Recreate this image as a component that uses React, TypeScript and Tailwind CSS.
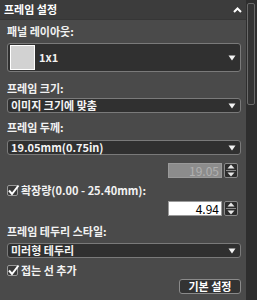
import React, { useState } from 'react';

const font = { fontFamily: '"Noto Sans CJK KR", "Noto Sans", "Liberation Sans", sans-serif' };

function Arrow() {
  return (
    <svg width="8" height="6" viewBox="0 0 8 6" className="shrink-0">
      <path d="M0.5 0.5 H7.5 L4 5.5 Z" fill="#f2f2f2" />
    </svg>
  );
}

function Select({ label, className = '' }: { label: string; className?: string }) {
  return (
    <div
      className={`flex items-center justify-between h-[15px] pl-[3px] pr-[4px] bg-[#303030] border border-[#7a7a7a] rounded-[3px] text-[11px] font-bold text-[#f4f4f4] leading-none ${className}`}
    >
      <span>{label}</span>
      <Arrow />
    </div>
  );
}

function Spinner() {
  return (
    <div className="flex flex-col w-[14px] h-[15px] bg-[#2c2c2c] border border-[#8a8a8a] rounded-[2px] items-center justify-center gap-[1px]">
      <svg width="8" height="5" viewBox="0 0 8 5">
        <path d="M0.5 4.5 H7.5 L4 0.5 Z" fill="#e6e6e6" />
      </svg>
      <div className="w-[10px] h-px bg-[#8a8a8a]" />
      <svg width="8" height="5" viewBox="0 0 8 5">
        <path d="M0.5 0.5 H7.5 L4 4.5 Z" fill="#e6e6e6" />
      </svg>
    </div>
  );
}

function Check({ on }: { on: boolean }) {
  return (
    <div className="w-[11px] h-[11px] bg-[#3a3a3a] border border-[#9a9a9a] rounded-[2px] relative shrink-0">
      {on && (
        <svg width="13" height="12" viewBox="0 0 13 12" className="absolute -left-[1px] -top-[2px]">
          <path d="M2 6.5 L5 10 L11.5 1.5" stroke="#ffffff" strokeWidth="2" fill="none" />
        </svg>
      )}
    </div>
  );
}

export default function App() {
  const [expand, setExpand] = useState(true);
  const [fold, setFold] = useState(true);

  return (
    <div className="w-[257px] h-[300px] flex bg-[#2e2e2e] overflow-hidden select-none" style={font}>
      <div className="w-[246px] flex flex-col bg-[#4a4a4a]">
        <div className="h-[20px] flex items-center justify-between pl-[4px] pr-[4px] bg-[#3c3c3c] border-b border-[#363636]">
          <span className="text-[11px] font-bold text-white leading-none">프레임 설정</span>
          <svg width="9" height="6" viewBox="0 0 9 6">
            <path d="M1 5 L4.5 1.5 L8 5" stroke="#ffffff" strokeWidth="2" fill="none" />
          </svg>
        </div>

        <div className="flex flex-col pl-[7px] pr-[5px] text-[11px] font-bold text-[#f2f2f2] leading-none">
          <div className="mt-[4px] h-[14px] flex items-center">패널 레이아웃:</div>

          <div className="mt-[5px] h-[29px] flex items-center pl-[2px] pr-[4px] bg-[#303030] border border-[#7a7a7a] rounded-[3px]">
            <div className="w-[25px] h-[25px] bg-[#d2d2d2] border border-white" />
            <span className="ml-[4px] flex-1">1x1</span>
            <Arrow />
          </div>

          <div className="mt-[9px] h-[14px] flex items-center">프레임 크기:</div>
          <Select label="이미지 크기에 맞춤" className="mt-[3px]" />

          <div className="mt-[7px] h-[14px] flex items-center">프레임 두께:</div>
          <Select label="19.05mm(0.75in)" className="mt-[6px]" />

          <div className="mt-[8px] flex justify-end gap-[2px] pr-[3px]">
            <div className="w-[54px] h-[15px] bg-[#8c8c8c] border border-[#9a9a9a] flex items-center justify-end pr-[2px] text-[#b0b0b0] font-normal text-[12px]">
              19.05
            </div>
            <Spinner />
          </div>

          <label className="mt-[5px] h-[14px] flex items-center gap-[3px]" onClick={() => setExpand(!expand)}>
            <Check on={expand} />
            <span>확장량(0.00 - 25.40mm):</span>
          </label>

          <div className="mt-[4px] flex justify-end gap-[2px] pr-[3px]">
            <div className="w-[54px] h-[15px] bg-white border border-[#9a9a9a] flex items-center justify-end pr-[2px] text-black font-normal text-[12px]">
              4.94
            </div>
            <Spinner />
          </div>

          <div className="mt-[8px] h-[14px] flex items-center">프레임 테두리 스타일:</div>
          <Select label="미러형 테두리" className="mt-[5px]" />

          <label className="mt-[5px] h-[14px] flex items-center gap-[3px]" onClick={() => setFold(!fold)}>
            <Check on={fold} />
            <span>접는 선 추가</span>
          </label>

          <div className="mt-[2px] flex justify-end">
            <button className="w-[62px] h-[15px] bg-[#333333] border border-[#8a8a8a] rounded-[3px] text-[11px] font-bold text-white leading-none">
              기본 설정
            </button>
          </div>
        </div>
      </div>

      <div className="w-[11px] pt-[3px] pl-[1px] pr-[2px]">
        <div className="h-[102px] bg-[#333333] border border-[#6a6a6a] rounded-[2px]" />
      </div>
    </div>
  );
}
